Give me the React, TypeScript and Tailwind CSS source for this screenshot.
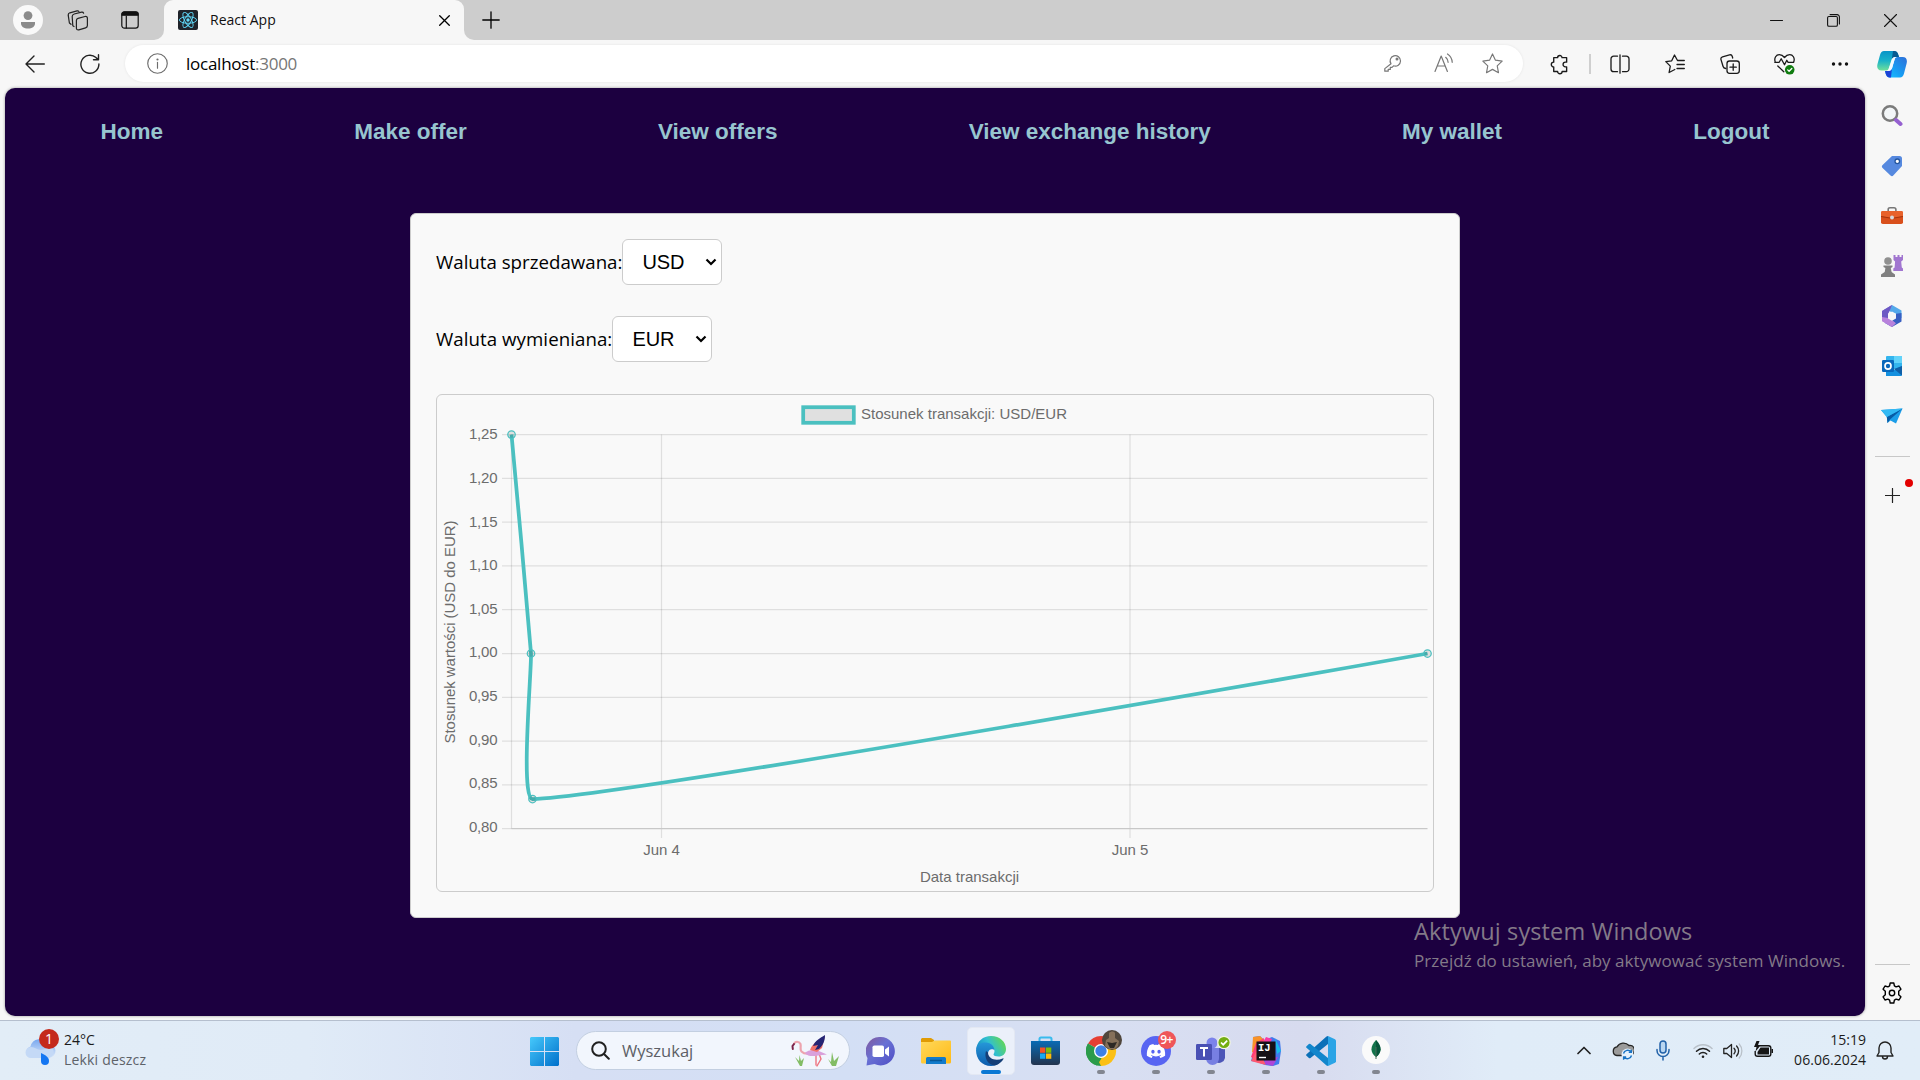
import React from "react";
import { FaDiscord } from "react-icons/fa";

type IconProps = { children: React.ReactNode; w?: number; h?: number; className?: string; box?: string; stroke?: string; sw?: number };

/** Thin outlined icon on a 20-unit grid. */
function Line({ children, w = 20, h = 20, className = "", box = "0 0 20 20", stroke = "currentColor", sw = 1.3 }: IconProps) {
  return (
    <svg width={w} height={h} viewBox={box} fill="none" stroke={stroke} strokeWidth={sw} strokeLinecap="round" strokeLinejoin="round" className={`shrink-0 ${className}`}>
      {children}
    </svg>
  );
}

/** Filled, multi-coloured icon. */
function Art({ children, w = 30, h = 30, className = "", box = "0 0 30 30" }: IconProps) {
  return (
    <svg width={w} height={h} viewBox={box} className={`shrink-0 ${className}`}>
      {children}
    </svg>
  );
}

function TabBar() {
  return (
    <div className="flex h-10 shrink-0 items-end bg-[#cdcdcd]">
      <div className="flex h-10 w-[154px] items-center">
        <div className="ml-[13px] flex h-[30px] w-[30px] items-center justify-center rounded-full bg-[#f9f9f9]">
          <Art w={16} h={18} box="0 0 16 18">
            <circle cx="8" cy="4.6" r="4.4" fill="#8b8b8b" />
            <path d="M1 11h14v1.5c0 3-3 5-7 5s-7-2-7-5z" fill="#8b8b8b" />
          </Art>
        </div>
        <Line w={21} h={21} className="ml-6 text-[#222]" box="0 0 21 21" sw={1.2}>
          <path d="M11 8.300 18 6.500c1.500-.4 2.400.3 2.400 1.800v7.200c0 1.200-.6 2-1.800 2.300l-6.800 2c-1.400.4-2.400-.3-2.400-1.800v-7.400c0-1.200.5-2 1.600-2.300z" />
          <path d="M7 16.500 5.800 15.800 5.200 6.600c0-1.400.7-2.200 2-2.600l7.400-1.800c1-.2 1.700.2 2 1" />
          <path d="M4 14.300 2.400 13 1.200 5.200c-.1-1.200.5-2 1.700-2.400L10 .9c.9-.2 1.500 0 1.900.6" />
        </Line>
        <Line w={18} h={18} className="ml-[33px] text-[#111]" box="0 0 18 18" sw={1.2}>
          <rect x=".8" y=".8" width="16.400" height="16.400" rx="2.600" />
          <path d="M1 4.200V3A2 2 0 0 1 3 1h12a2 2 0 0 1 2 2v1.200z" fill="#111" />
          <path d="M5.300 5v12" />
        </Line>
      </div>
      <div className="h-[10px] w-[10px] bg-[#f7f7f7]"><div className="h-full w-full rounded-br-[10px] bg-[#cdcdcd]" /></div>
      <div className="flex h-10 w-[300px] items-center rounded-t-[9px] bg-[#f7f7f7] pl-[14px] pr-[14px]">
        <Art w={20} h={20} box="0 0 20 20">
          <rect width="20" height="20" rx="2" fill="#20232a" />
          <g fill="none" stroke="#61dafb" strokeWidth=".9">
            <ellipse cx="10" cy="10" rx="8.600" ry="3.300" />
            <ellipse cx="10" cy="10" rx="8.600" ry="3.300" transform="rotate(60 10 10)" />
            <ellipse cx="10" cy="10" rx="8.600" ry="3.300" transform="rotate(120 10 10)" />
          </g>
          <circle cx="10" cy="10" r="1.700" fill="#61dafb" />
        </Art>
        <span className="ml-3 flex-1 whitespace-nowrap pb-[2px] text-[14px] tracking-[0.02px] text-[#111]">React App</span>
        <Line w={11} h={11} box="0 0 11 11" className="text-black" sw={1.300}><path d="m.7.7 9.600 9.600M10.300.7.7 10.300" /></Line>
      </div>
      <div className="h-[10px] w-[10px] bg-[#f7f7f7]"><div className="h-full w-full rounded-bl-[10px] bg-[#cdcdcd]" /></div>
      <div className="flex h-10 flex-1 items-center justify-between pl-2 pr-[23px]">
        <Line w={18} h={18} box="0 0 18 18" className="text-black" sw={1.300}><path d="M9 .8v16.400M.8 9h16.400" /></Line>
        <div className="flex items-center gap-[44px] text-[#111]">
          <Line w={13} h={13} box="0 0 13 13" sw={1.100}><path d="M.5 6.500h12" /></Line>
          <Line w={13} h={13} box="0 0 13 13" sw={1.100}>
            <rect x=".6" y="2.500" width="9.800" height="9.800" rx="1.300" /><path d="M3.100.6h7a2.300 2.300 0 0 1 2.300 2.300v7" />
          </Line>
          <Line w={13} h={13} box="0 0 13 13" sw={1.100}><path d="m.5.5 12 12m0-12-12 12" /></Line>
        </div>
      </div>
    </div>
  );
}

const star = "m10 .9 2.800 5.900 6.400.9-4.700 4.500 1.200 6.500L10 15.600l-5.700 3.100 1.200-6.500L.8 7.700l6.400-.9z";

function Toolbar() {
  return (
    <div className="flex h-12 shrink-0 items-center bg-[#f7f7f7]">
      <Line w={20} h={18} box="0 0 20 18" className="ml-[25px] text-[#222]" sw={1.400}><path d="M19.300 9H1m8-8L1 9l8 8" /></Line>
      <Line w={20} h={20} className="ml-[35px] text-[#222]" sw={1.400}><path d="M18.900 10A9 9 0 1 1 16 3.600l2.300 2M18.500.8v5h-5" /></Line>
      <div className="ml-[25px] flex h-[37px] w-[1398px] -translate-y-px items-center rounded-full bg-white pl-[22px] pr-[20px] shadow-[0_0_3px_rgba(0,0,0,0.08)]">
        <Line className="text-[#6d6d6d]" w={21} h={21} sw={1.100}><circle cx="10" cy="10" r="9.300" /><path d="M10 9v5.500" /><circle cx="10" cy="6.200" r=".5" fill="currentColor" /></Line>
        <span className="ml-[18px] flex-1 whitespace-nowrap pt-px text-[17px] tracking-[-0.250px] text-black">localhost<span className="text-[#767676]">:3000</span></span>
        <div className="flex items-center text-[#777]">
          <Line w={18} h={18} box="0 0 18 18" sw={1.200}>
            <path d="M7 9.800a5.200 5.200 0 1 1 2.600 2L8 13.400H6.300v2H4.200v1.800H.8v-2.600z" /><circle cx="13" cy="5" r=".9" fill="currentColor" />
          </Line>
          <Line w={20} h={20} className="ml-[32px] mr-[28px]" sw={1.200}><path d="M1 18.500 7.200 3l6.200 15.500M3.300 13h7.800M11.700 4.300a7 7 0 0 1 2.400 5M13.500 1a10.500 10.500 0 0 1 4.700 8.300" /></Line>
          <Line w={21} h={21} sw={1.100}><path d={star} /></Line>
        </div>
      </div>
      <div className="ml-[8px] flex h-full items-center text-[#1a1a1a]">
        <div className="flex w-[56px] justify-center">
          <Line w={21} h={21} sw={1.300}>
            <path d="M5 3.500h3.200a2.100 2.100 0 1 1 4.200 0h4.400v4.300h-1.200a2.200 2.200 0 0 0 0 4.400h1.200v4.500h-4.300a2.100 2.100 0 0 1-4.300 0H4.500v-4.300a2.200 2.200 0 0 1 0-4.600V3.500z" />
          </Line>
        </div>
        <div className="ml-[2px] mr-px h-5 w-[2px] bg-[#cfcfcf]" />
        <div className="flex w-[55px] justify-center">
          <Line w={20} h={20} sw={1.300}><path d="M7.500 2.200H3.700A2.700 2.700 0 0 0 1 5v10a2.700 2.700 0 0 0 2.700 2.700h3.800M12.500 2.200h3.800A2.700 2.700 0 0 1 19 5v10a2.700 2.700 0 0 1-2.700 2.700h-3.800M10 .8v18.400" /></Line>
        </div>
        <div className="flex w-[55px] justify-center">
          <Line w={20} h={20} sw={1.300}><path d="M17 6.500h-4.500L9.500 1 6.700 6.800.8 7.600l4.500 4.500-1.200 6.400 5.700-3M12 10.500h7.300M12 14.500h7.300M13.500 6.500h5.800" /></Line>
        </div>
        <div className="flex w-[55px] justify-center">
          <Line w={20} h={20} sw={1.300}><path d="M5.800 14.500c-1.500-.2-2.400-.9-2.700-2L1 5.600C.6 4.200 1.200 3.200 2.500 2.800L9.500.9c1.400-.4 2.400.2 2.800 1.600l.4 1.500" /><rect x="7" y="7" width="12.300" height="12.300" rx="2.500" /><path d="M13.200 10v6.300M10 13.200h6.300" /></Line>
        </div>
        <div className="flex w-[55px] justify-center">
          <Line w={21} h={22} box="0 0 21 22" sw={1.300}>
            <path d="M1.300 9.200C-.3 4.800 2.300 1.600 5.300 1.600c2.400 0 4 1.300 5.200 2.900 1.200-1.600 2.800-2.900 5.200-2.900 3 0 5.600 3.200 4 7.400M.8 9.300h4.400l2-3.500 3.300 6 2.300-4.500 1.300 2h5.600M3.800 13l6 5.700" />
            <circle cx="15.700" cy="16.800" r="4.800" fill="#107c10" stroke="none" /><path d="m13.700 16.900 1.400 1.400 2.700-2.800" stroke="#fff" />
          </Line>
        </div>
        <div className="flex w-[55px] justify-center">
          <Art w={18} h={6} box="0 0 18 6"><circle cx="2.500" cy="3" r="1.700" fill="#111" /><circle cx="9" cy="3" r="1.700" fill="#111" /><circle cx="15.500" cy="3" r="1.700" fill="#111" /></Art>
        </div>
      </div>
      <Art w={30} h={28} box="0 0 30 28" className="ml-[10px]">
        <defs>
          <linearGradient id="cpA" x1="0" y1="0" x2="0" y2="1"><stop stopColor="#0894c8" /><stop offset=".5" stopColor="#19b2c9" /><stop offset="1" stopColor="#6fe09a" /></linearGradient>
          <linearGradient id="cpB" x1="1" y1="0" x2="0" y2="1"><stop stopColor="#2f6fd8" /><stop offset=".6" stopColor="#16a0f5" /><stop offset="1" stopColor="#19c7ff" /></linearGradient>
        </defs>
        <path d="M7 1h10c3 0 4 2 5 6h-4c-2 0-3 1-3.600 3l-2.500 8c-.6 2-1.400 2.500-3 2.500H4.500C1 20.500-.5 18 .5 14L3 5c.7-2.500 2-4 4-4z" fill="url(#cpA)" />
        <path d="M23 27.500H13c-3 0-4-2-5-6.500h3.500c2 0 3-1 3.600-3l2.500-8.500C18.200 7.500 19 7 20.600 7h5c3.500 0 5 2.500 4 6.500L27 23.500c-.7 2.500-2 4-4 4z" fill="url(#cpB)" />
        <path d="M17 1c3 0 4 2 5 6h-4c-1.500 0-2.500.8-3.200 2.300L16 1z" fill="#075b91" />
        <path d="M8 21c1 4.500 2 6.500 5 6.500h1l1-9.500c-.6 2-1.600 3-3.500 3z" fill="#1b42d6" />
        <path d="M15 10c.6-2 1.500-3 3.500-3h2c-1.600 0-2.400.7-2.900 2.500L15.100 18c-.6 2-1.600 3-3.600 3H9c1.500 0 2.400-.7 2.900-2.500z" fill="#f3fbff" />
      </Art>
    </div>
  );
}

const navItems = ["Home", "Make offer", "View offers", "View exchange history", "My wallet", "Logout"];

function Select({ label, value, labelClass }: { label: string; value: string; labelClass: string }) {
  return (
    <div className="flex h-[46px] items-center">
      <span className={`shrink-0 whitespace-nowrap text-[18.700px] text-black ${labelClass}`}>{label}</span>
      <button className="flex h-[46px] w-[100px] items-center justify-between rounded-[6px] border border-[#ccc] bg-white pl-[19.500px] pr-[4px] font-[Liberation_Sans] text-[20px] tracking-[-0.200px] text-black">
        {value}
        <Line w={12} h={8} box="0 0 12 8" sw={2.200}><path d="m1.500 1.500 4.500 4.500 4.500-4.500" strokeLinecap="butt" strokeLinejoin="miter" /></Line>
      </button>
    </div>
  );
}

const ticks = ["1,25", "1,20", "1,15", "1,10", "1,05", "1,00", "0,95", "0,90", "0,85", "0,80"];

function RateChart() {
  return (
    <svg width="996" height="496" viewBox="437 395 996 496" fontFamily="Liberation Sans, Arial, sans-serif" fontSize="15" fill="#6c6c6c">
      <g stroke="#000" strokeOpacity=".1" strokeWidth="1.250">
        {ticks.map((t, i) => <path key={t} d={`M502 ${434.600 + i * 43.780}H1427.500`} />)}
        <path d="M511.500 434.500V828.700M661.500 434.500V838M1130 434.500V838M511.500 828.600H1427.500" />
      </g>
      {ticks.map((t, i) => <text key={t} x="497.500" y={439.200 + i * 43.650} textAnchor="end" textLength="28.500">{t}</text>)}
      <text x="661.500" y="855" textAnchor="middle">Jun 4</text>
      <text x="1130" y="855" textAnchor="middle">Jun 5</text>
      <text x="969.500" y="882" textAnchor="middle">Data transakcji</text>
      <text transform="translate(455.300 632) rotate(-90)" textAnchor="middle" textLength="223">Stosunek wartości (USD do EUR)</text>
      <rect x="803.200" y="407.200" width="50.600" height="15.600" fill="#e0e0e0" stroke="#4bc0c0" strokeWidth="3.750" />
      <text x="861" y="419" textLength="206">Stosunek transakcji: USD/EUR</text>
      <path d="M511.500 434.500C511.500 434.500 529.700 631.600 531 653.500 531.800 668 520 799 532.500 799 609.800 799 1427.500 653.500 1427.500 653.500" fill="none" stroke="#4bc0c0" strokeWidth="3.750" />
      <g fill="#000" fillOpacity=".1" stroke="#4bc0c0" strokeWidth="1.250">
        <circle cx="511.500" cy="434.600" r="3.750" /><circle cx="531" cy="653.500" r="3.750" /><circle cx="532.500" cy="799" r="3.750" /><circle cx="1427.500" cy="653.500" r="3.750" />
      </g>
    </svg>
  );
}

function Page() {
  return (
    <main className="relative ml-[5px] flex h-[928px] w-[1860px] shrink-0 flex-col items-center rounded-[10px] bg-[#1c0040] shadow-[0_0_3px_rgba(0,0,0,0.4)]">
      <nav className="flex h-[86px] w-full items-center justify-around pt-[2px] font-[Liberation_Sans] text-[22.500px] font-bold text-[#97c5cf]">
        {navItems.map((n) => <a key={n} className="whitespace-nowrap">{n}</a>)}
      </nav>
      <section className="mt-[39px] flex h-[705px] w-[1050px] flex-col rounded-[6px] border border-[#ccc] bg-[#f9f9f9] px-[25px] pt-[25px]">
        <Select label="Waluta sprzedawana:" value="USD" labelClass="w-[186px]" />
        <div className="h-[31px]" />
        <Select label="Waluta wymieniana:" value="EUR" labelClass="w-[176px] tracking-[0.050px]" />
        <div className="mt-8 h-[498px] w-[998px] shrink-0 rounded-[6px] border border-[#ccc]"><RateChart /></div>
      </section>
      <div className="absolute left-[1409px] top-[827px] whitespace-nowrap text-[#837a88]">
        <p className="text-[23.500px] leading-[32px] tracking-[0.130px]">Aktywuj system Windows</p>
        <p className="mt-[2px] text-[17px] leading-[24px] tracking-[0.050px]">Przejdź do ustawień, aby aktywować system Windows.</p>
      </div>
    </main>
  );
}

function Sidebar() {
  return (
    <aside className="flex w-[54px] flex-col items-center">
      <div className="mt-[3px] flex flex-col [&>svg]:my-[14px]">
        <Art w={22} h={22} box="0 0 22 22">
          <circle cx="9" cy="8.500" r="7.200" fill="#f3f6f8" stroke="#7b7b7b" strokeWidth="2.500" /><path d="m15 15 4.500 4" stroke="#9560d0" strokeWidth="4" strokeLinecap="round" />
        </Art>
        <Art w={22} h={22} box="0 0 22 22">
          <path d="M11 1h7.500A2.500 2.500 0 0 1 21 3.500V11l-8.500 9.300a2 2 0 0 1-3 .1L1.600 13a2 2 0 0 1 0-2.900z" fill="#5689df" /><circle cx="16.300" cy="6.300" r="2.300" fill="#fff" stroke="#25569e" strokeWidth="1.300" />
        </Art>
        <Art w={22} h={22} box="0 0 22 22">
          <path d="M7.200 7V4.600C7.200 3.300 8 2.800 9 2.800h4c1.200 0 1.900.6 1.900 1.800V7" fill="none" stroke="#777" strokeWidth="1.600" /><rect y="6" width="22" height="13" rx="1.800" fill="#d9501c" /><path d="M0 7.500Q0 6 1.800 6h18.400Q22 6 22 7.500V11l-9 2H9l-9-2z" fill="#e8622b" /><path d="M0 11.500 9 13h4l9-1.500" fill="none" stroke="#a5340d" /><circle cx="11" cy="12.500" r="2" fill="#d7dadd" />
        </Art>
        <Art w={22} h={22} box="0 0 22 22">
          <path d="M12.500 0h2v2h2V0h2v2h2V0H22v5l-1.800 1.500.6 6 1.200 1v2.500h-9.700v-2.500l1.300-1 .5-6L12.500 5z" fill="#a176d0" /><circle cx="7" cy="6" r="3.800" fill="#909090" /><path d="M2.500 10.500h9v1.500L9.800 13l.8 4 3.400 2.500V22H0v-2.500L3.700 17l.7-4-1.900-1z" fill="#808080" />
        </Art>
        <Art w={22} h={22} box="0 0 22 22">
          <path d="M11 0 20.500 5.500V13H15V9L8 6 2 5.500z" fill="#54a9ea" /><path d="M20.500 8v8.500L11 22l-7-4 7-2.500 4-3.500V8.700z" fill="#385fc2" /><path d="M1 6 11 0 8.500 4.500 7 9v4l4 2.500 3 2L11 22 1 16z" fill="#a77ad9" /><path d="m1 6 10-6-2 5-2 4v4l-6 3z" fill="#6d59c4" /><path d="m1 12 6 1 4 2.300 4 2.900-4 3.800-10-6z" fill="#b882dc" /><path d="m11 6.500 4 2.200v4.700l-4 2.300-4-2.300V8.700z" fill="#f7f7f7" />
        </Art>
        <Art w={22} h={22} box="0 0 22 22">
          <rect x="5" y="1" width="16" height="13" rx="1" fill="#34b5ee" /><path d="M13 1h7a1 1 0 0 1 1 1v6h-8z" fill="#62d3fa" /><path d="m5 12 8 3 8-4v9a1 1 0 0 1-1 1H5z" fill="#1490df" /><path d="m13 14 8 6.500V11z" fill="#0f5fa7" /><rect x="1" y="5" width="12" height="12" rx="1.200" fill="#0968bc" /><ellipse cx="7" cy="11" rx="3" ry="3.200" fill="none" stroke="#fff" strokeWidth="1.700" />
        </Art>
        <Art w={22} h={22} box="0 0 22 22">
          <path d="M0 5 21.500 3.500 15 18.500 9.500 15.500 6.500 18 5.800 12z" fill="#1b9de8" /><path d="M5.800 12 21.500 3.500 9 14.500 6.500 18z" fill="#075ba5" /><path d="M0 5 21.500 3.500 5.800 12z" fill="#33b9f3" />
        </Art>
      </div>
      <div className="mt-[15px] h-px w-[35px] bg-[#c8c8c8]" />
      <div className="relative mt-[31px]">
        <Line w={15} h={15} box="0 0 15 15" className="text-[#222]" sw={1.200}><path d="M7.500.5v14M.5 7.500h14" /></Line>
        <span className="absolute left-[20px] top-[-9px] h-2 w-2 rounded-full bg-[#e30000]" />
      </div>
      <div className="mb-[17px] mt-auto h-px w-[35px] bg-[#c8c8c8]" />
      <Line w={22} h={22} box="0 0 22 22" className="mb-[16px] text-black" sw={1.400}>
        <path d="M9.200 1h3.600l.6 2.900 1.700 1 2.900-.9 1.900 3.200-2.200 2.100v3.400l2.200 2.100-1.900 3.200-2.900-.9-1.700 1-.6 2.900H9.200l-.6-2.900-1.700-1-2.900.9-1.900-3.200 2.200-2.100V9.300L2.100 7.200 4 4l2.900.9 1.700-1z" /><circle cx="11" cy="11" r="2.700" />
      </Line>
    </aside>
  );
}

function TaskbarApp({ children, running, active }: { children: React.ReactNode; running?: boolean; active?: boolean }) {
  return (
    <div className="flex h-full w-[55px] items-center justify-center">
      <div className={active ? "flex h-12 w-12 flex-col items-center rounded-[5px] border border-[#e3e8f3] bg-[#ebf0fa]" : "flex h-12 w-12 flex-col items-center border border-transparent"}>
        <div className="mt-[5px] flex h-[37px] items-center">{children}</div>
        {active && <div className="h-1 w-5 rounded-full bg-[#0a78d4]" />}
        {running && <div className="h-1 w-2 rounded-full bg-[#828690]" />}
      </div>
    </div>
  );
}

function Flamingo() {
  return (
    <Art w={48} h={32} box="0 0 48 32">
      <g fill="none" strokeLinecap="round">
        <path d="M25 20v10M28.500 20l1.500 4-4 7" stroke="#ee7480" strokeWidth="1.400" />
        <path d="M3 9c1-3 5-3 6.500 0 .8 3-1 5 1 7.500 2 2 5 2.500 8 2" stroke="#eda4ae" strokeWidth="2.200" />
        <path d="M3 9 1.500 11l.3 3" stroke="#7c244b" strokeWidth="2" />
      </g>
      <path d="M14 18c3-3 9-4 15-1.500l7 3-9 1c-6 1-10 1-13-2.500z" fill="#d9a0db" />
      <path d="M19 15C21 9 27 5 34 1l-3 12-5 4z" fill="#f06f68" />
      <path d="M34 0c0 6-2 10-6 14l-4 1 3-5-5 1c2-5 7-8 12-11z" fill="#242474" />
      <g fill="#83bd65"><path d="m9 31-5-9 4 4 .5-6 1.500 6 3-3-2 8zM41 31l-4-7 3 3 1-10 2 9 5-5-3 10z" /></g>
    </Art>
  );
}

function Taskbar() {
  return (
    <footer className="flex h-[60px] shrink-0 items-center border-t border-[#b5bfce] bg-[linear-gradient(90deg,#e2edf7_0%,#e0ebf7_16%,#d6dff4_30%,#d3dff5_44%,#d8dff2_58%,#d7dbef_68%,#e0ecf8_78%,#e1edf8_100%)]">
      <div className="flex w-[517px] items-center pl-6">
        <Art w={36} h={38} box="0 0 36 38" className="-mt-[7px]">
          <defs><linearGradient id="cloud" x1="0" y1="0" x2="0" y2="1"><stop stopColor="#78a7ef" /><stop offset="1" stopColor="#dbe8fa" /></linearGradient></defs>
          <path d="M7 30a6 6 0 0 1-.5-11.500A9.500 9.500 0 0 1 24 16a7 7 0 0 1 1 14z" fill="url(#cloud)" />
          <path d="M7 30a5.500 5.500 0 0 1 0-11c4 0 6 3 10 3 5 0 7-3 11-2a6 6 0 0 1-3 10z" fill="#c4d9f6" />
          <path d="M17 25c4 2 8 4 8 8a4 4 0 0 1-8 0z" fill="#1476f2" />
          <circle cx="25" cy="11" r="10" fill="#c4291c" />
          <text x="25" y="16" textAnchor="middle" fill="#fff" fontSize="14" fontFamily="Open Sans, sans-serif">1</text>
        </Art>
        <div className="-mt-[2px] ml-[4px] whitespace-nowrap text-[14px] leading-5">
          <p className="text-[#1b1b1b]">24°C</p><p className="tracking-[0.180px] text-[#5d6269]">Lekki deszcz</p>
        </div>
      </div>
      <TaskbarApp>
        <Art w={29} h={29} box="0 0 29 29">
          <defs><linearGradient id="win" x1="0" y1="0" x2="1" y2="1"><stop stopColor="#46c9fb" /><stop offset="1" stopColor="#0070cb" /></linearGradient></defs>
          <path d="M1 0h13v14H0V1zM15 0h13l1 1v13H15zM0 15h14v14H1l-1-1zM15 15h14v13l-1 1H15z" fill="url(#win)" />
        </Art>
      </TaskbarApp>
      <div className="ml-[4px] mr-[3px] flex h-[39px] w-[274px] items-center rounded-full border border-[#c3cfe1] bg-[#f2f6fd] pl-[14px] pr-[10px]">
        <Line w={19} h={19} box="0 0 19 19" sw={2} stroke="#202020"><circle cx="8" cy="8" r="6.800" /><path d="m13 13 4.800 4.800" /></Line>
        <span className="ml-[12px] flex-1 pt-px text-[16.500px] text-[#5d5f66]">Wyszukaj</span>
        <Flamingo />
      </div>
      <TaskbarApp>
        <Art w={29} h={29} box="0 0 29 29">
          <defs><linearGradient id="chat" x1="0" y1="0" x2="1" y2="1"><stop stopColor="#83599b" /><stop offset=".45" stopColor="#6870d4" /><stop offset="1" stopColor="#4f4dc4" /></linearGradient></defs>
          <path d="M14.500 0a14.200 14.200 0 1 1-6 27L.5 28.500 1.500 21A14.200 14.200 0 0 1 14.500 0z" fill="url(#chat)" /><rect x="6.500" y="8.500" width="11.500" height="11.500" rx="1.800" fill="#fff" /><path d="m19 12.500 4-3v10l-4-3z" fill="#fff" />
        </Art>
      </TaskbarApp>
      <TaskbarApp>
        <Art w={30} h={28} box="0 0 30 28">
          <defs><linearGradient id="folder" x1="0" y1="0" x2="1" y2="1"><stop stopColor="#ffd95c" /><stop offset="1" stopColor="#ffba16" /></linearGradient></defs>
          <path d="M1 1h9l3 2v4H0V2z" fill="#e09b04" /><path d="M0 5h11l2.500-1.500H29a1 1 0 0 1 1 1V25a1.500 1.500 0 0 1-1.500 1.500h-27A1.500 1.500 0 0 1 0 25z" fill="url(#folder)" /><path d="M5 27v-5.500A1.500 1.500 0 0 1 6.500 20h17a1.500 1.500 0 0 1 1.500 1.500V27z" fill="#127bcb" /><path d="M9 23.500h12" stroke="#075795" strokeWidth="1.500" />
        </Art>
      </TaskbarApp>
      <TaskbarApp active>
        <Art w={30} h={30}>
          <defs>
            <linearGradient id="edA" x1="0" y1=".7" x2="1" y2=".3"><stop stopColor="#1382c6" /><stop offset=".5" stopColor="#30bfd1" /><stop offset="1" stopColor="#65d84e" /></linearGradient>
            <linearGradient id="edB" x1="0" y1="0" x2="0" y2="1"><stop stopColor="#2597d8" /><stop offset="1" stopColor="#0d5cad" /></linearGradient>
          </defs>
          <path d="M0 14C1 5 7 0 15 0c9 0 15 6 15 13 0 5-3.500 7.500-7.500 7.500-3 0-5-1-5-2 0-.7 1-1.500 1-3.500 0-3-2.500-5.500-6-5.500C6 9.500 0 12 0 14z" fill="url(#edA)" />
          <path d="M0 14C1 8 6 6 10 6.500c5 0 8.500 4 8.500 8-1-2-6.500-2-6.500 3.500 0 6 6 12 13 7-2.500 3.500-6.500 5-10 5C6 30 0 23 0 14z" fill="url(#edB)" />
          <path d="M10 15c-2 6 1 14 9 14.500 4-1 7-4 8.500-6.500.3-.6-.2-1-.8-.6C20 25.500 12 23 12 16.500z" fill="#153f78" />
        </Art>
      </TaskbarApp>
      <TaskbarApp>
        <Art w={29} h={30} box="0 0 29 30">
          <defs><linearGradient id="store" x1="0" y1="0" x2="0" y2="1"><stop stopColor="#096bb4" /><stop offset="1" stopColor="#23344e" /></linearGradient></defs>
          <path d="M8.500 6V3a1.500 1.500 0 0 1 1.500-1.500h9A1.500 1.500 0 0 1 20.500 3v3" fill="none" stroke="#39bbed" strokeWidth="2" /><path d="M0 5h29v21a3 3 0 0 1-3 3H3a3 3 0 0 1-3-3z" fill="url(#store)" />
          <path d="M9 11.500h5.300v5.300H9z" fill="#f35325" /><path d="M15 11.500h5.300v5.300H15z" fill="#81bc06" /><path d="M9 17.500h5.300v5.300H9z" fill="#17a8f0" /><path d="M15 17.500h5.300v5.300H15z" fill="#ffba08" />
        </Art>
      </TaskbarApp>
      <TaskbarApp running>
        <Art w={36} h={36} box="0 0 36 36" className="-mt-[6px] ml-[6px]">
          <path d="M15 21 2 13.500A15 15 0 0 1 28 13.500z" fill="#e63f33" /><path d="M15 21 28 13.500A15 15 0 0 1 15 36z" fill="#fbc016" /><path d="M15 21v15A15 15 0 0 1 2 13.500z" fill="#2b9b4a" /><path d="m9 24.500 6 11.500 6.500-11.500z" fill="#fbc016" /><path d="m9 25 6.500 3.300L11 35.500A15 15 0 0 1 2 13.500z" fill="#2b9b4a" />
          <circle cx="15" cy="21" r="7" fill="#fff" /><circle cx="15" cy="21" r="5.700" fill="#3e80e6" />
          <circle cx="26" cy="10" r="10" fill="#4f463c" /><path d="M23 3c2-2 5-2 6 0v5l4 3-1 5-3 3h-6l-4-3 1-6 3-2z" fill="#85705a" /><path d="m21 12 3 6h4l3-6-5 1z" fill="#2d2925" />
        </Art>
      </TaskbarApp>
      <TaskbarApp running>
        <div className="relative -mt-px flex h-[30px] w-[30px] items-center justify-center rounded-full bg-[#5865f2]">
          <FaDiscord size={20} color="#fff" />
          <span className="absolute -right-[5px] -top-[5px] flex h-[18px] w-[18px] items-center justify-center rounded-full bg-[#ef5659] text-[12px] font-semibold tracking-[-0.500px] text-white">9+</span>
        </div>
      </TaskbarApp>
      <TaskbarApp running>
        <Art w={35} h={30} box="0 0 35 30" className="ml-[5px]">
          <circle cx="16" cy="7" r="5.500" fill="#7b83eb" /><path d="M20 12h9v10a6 6 0 0 1-9 4z" fill="#4d56b8" /><path d="M10 12h13v10c0 4-3 7-6.500 7S10 26 10 22z" fill="#777fe2" /><rect y="8" width="16" height="16" rx="1.200" fill="#4950b4" /><path d="M4 12h8M8 12v8.500" stroke="#fff" strokeWidth="2" /><circle cx="28" cy="6.500" r="6.200" fill="#73ae12" stroke="#f3f6e7" strokeWidth="1.200" /><path d="m25 6.500 2.200 2.200 4-4" fill="none" stroke="#fff" strokeWidth="1.700" />
        </Art>
      </TaskbarApp>
      <TaskbarApp running>
        <Art w={30} h={30}>
          <path d="m2 1 7-1 4 4 8-3 8 4 1 10-2 13-6 2-8-1-8-3-6-1 3-11z" fill="#4179ed" /><path d="m2 1 7-1 5 5-9 13-4-2z" fill="#f99329" /><path d="m5 7 8-5-2 15-6 7-5-3z" fill="#ff3b77" /><path d="M0 25 7 12l8 17-8-2z" fill="#ff5870" /><path d="m15 1 6 2-6 14-5-7z" fill="#f83aa5" /><path d="m24 2 6 13-4 3z" fill="#18bce9" /><path d="m14 23 13-2-5 9-8-2z" fill="#ae44d7" />
          <rect x="5.500" y="5.500" width="19" height="19" fill="#151116" /><text x="7" y="15" fill="#fff" fontSize="10.500" fontWeight="700" fontFamily="Liberation Mono, monospace">IJ</text><path d="M8 21.500h7" stroke="#fff" strokeWidth="1.400" />
        </Art>
      </TaskbarApp>
      <TaskbarApp running>
        <Art w={30} h={30}>
          <path d="m22 0 7 3.200a2 2 0 0 1 1 1.600v20.400a2 2 0 0 1-1 1.600L22 30z" fill="#2ba4e6" /><path d="M22 0v8L4.500 22a1.200 1.200 0 0 1-1.600 0L.5 19.700a1 1 0 0 1 0-1.500L20.500.5z" fill="#0b70b8" /><path d="M22 30v-8L4.500 8a1.200 1.200 0 0 0-1.600 0L.5 10.300a1 1 0 0 0 0 1.500L20.500 29.500z" fill="#1286cc" />
        </Art>
      </TaskbarApp>
      <TaskbarApp running>
        <div className="-mt-[2px] flex h-7 w-7 items-center justify-center rounded-full bg-[#fafafa]">
          <Art w={10} h={20} box="0 0 10 20"><path d="M5 0c5 5 7 12 0 17-7-5-5-12 0-17z" fill="#12734a" /><path d="M5 0c5 5 7 12 0 17z" fill="#07563b" /><path d="M5 7v12" stroke="#466d58" /></Art>
        </div>
      </TaskbarApp>
      <div className="ml-auto flex items-center pr-[26px] text-[#222]">
        <Line w={14} h={9} box="0 0 14 9" sw={1.700}><path d="m1 7.500 6-6 6 6" /></Line>
        <Art w={22} h={20} box="0 0 22 20" className="ml-[21px]">
          <path d="M5 14.500a4.400 4.400 0 0 1 0-8.700A7.500 7.500 0 0 1 17 4.500a4.800 4.800 0 0 1 2.500 9.200l-3 .8z" fill="#9b9b9b" stroke="#252525" strokeWidth="1.300" /><circle cx="15.500" cy="13.500" r="6" fill="#e4f0fb" /><path d="M11.500 12.500a4.200 4.200 0 0 1 7.500-1.500m.5 3.500a4.200 4.200 0 0 1-7.500 1.500m7.300-7.300v2.700h-2.500m-5.200 7.300V16h2.500" fill="none" stroke="#1973c4" strokeWidth="1.400" />
        </Art>
        <Line w={14} h={21} box="0 0 14 21" className="ml-[22px]" stroke="#2262a9" sw={1.500}><rect x="4" y=".9" width="6" height="12" rx="3" fill="#b9d6f1" /><path d="M1 9.500v1a6 6 0 0 0 12 0v-1M7 16.500v3.500" /></Line>
        <Line w={20} h={16} box="0 0 20 16" className="ml-[23px]" sw={1.500}><path d="M1 5.500a12.500 12.500 0 0 1 18 0" stroke="#b9c1c9" /><path d="M3.500 8.300a9 9 0 0 1 13 0M6.300 11a5.200 5.200 0 0 1 7.400 0" /><circle cx="10" cy="13.700" r="1.300" fill="currentColor" stroke="none" /></Line>
        <Line w={20} h={18} box="0 0 20 18" className="ml-[10px]" sw={1.300}><path d="M.8 6.500h3L8.500 2.500v13L3.800 11.500h-3zM11 6.300a4 4 0 0 1 0 5.400M13.600 4a7.300 7.300 0 0 1 0 10" /><path d="M16.200 2a10.500 10.500 0 0 1 0 14" stroke="#b9c1c9" /></Line>
        <Art w={21} h={18} box="0 0 21 18" className="-mt-[2px] ml-[10px]"><path d="M7 4.700h8.500A2.300 2.300 0 0 1 17.800 7v6a2.300 2.300 0 0 1-2.300 2.300h-11A2.300 2.300 0 0 1 2.200 13v-3" fill="none" stroke="#161616" strokeWidth="1.400" /><path d="M7.500 6.500H16v7H4.500V11zM18.500 8H20v4h-1.500zM3.500 0 1 6h2.500l-1 4.500L8 4H5l1.500-4z" fill="#161616" /></Art>
        <div className="-mt-[2px] ml-[19px] w-[73px] whitespace-nowrap text-right text-[14px] leading-5 text-[#1b1b1b]"><p>15:19</p><p className="tracking-[0.050px]">06.06.2024</p></div>
        <Line w={18} h={20} box="0 0 18 20" className="ml-[10px]" sw={1.400}><path d="M9 1a6 6 0 0 0-6 6v4.500L1 15h16l-2-3.500V7a6 6 0 0 0-6-6zM6.500 15.500a2.500 2.500 0 0 0 5 0" /></Line>
      </div>
    </footer>
  );
}

export default function App() {
  return (
    <div className="flex h-[1080px] w-[1920px] flex-col overflow-hidden bg-[#f7f7f7] font-['Open_Sans',sans-serif]">
      <TabBar />
      <Toolbar />
      <div className="flex h-[932px] shrink-0">
        <Page />
        <Sidebar />
      </div>
      <Taskbar />
    </div>
  );
}
